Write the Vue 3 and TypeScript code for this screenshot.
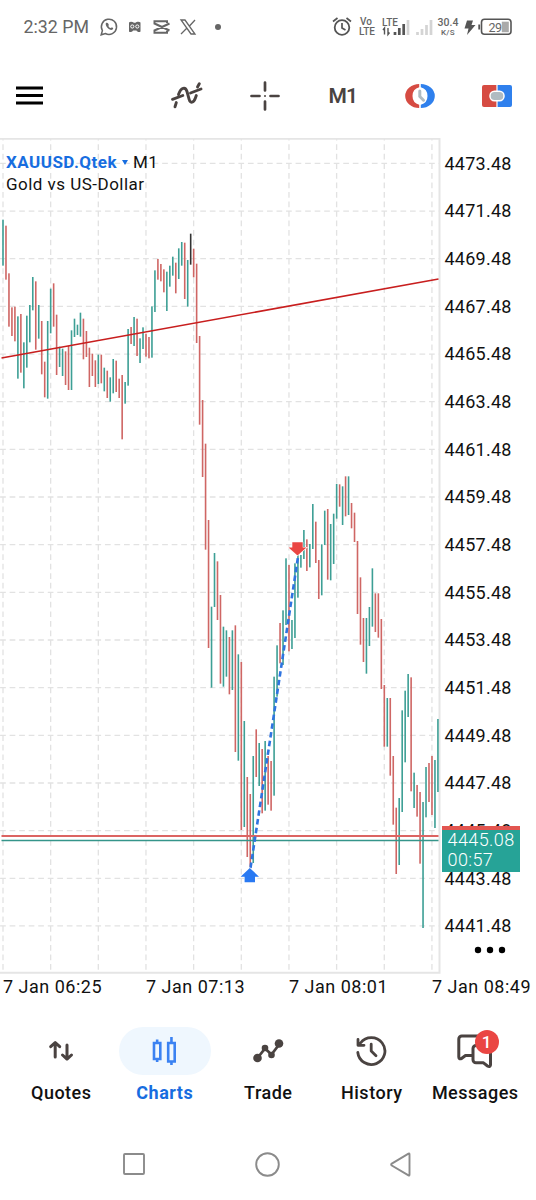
<script setup lang="ts">
interface Bar {
  x: number
  top: number
  height: number
  color: string
}

interface Segment {
  base: number
  bars: string
}

const STEP = 2.979
const CELL = 47.66
const PLOT_TOP = 138

const palette: Record<string, string> = { G: '#3d9f95', R: '#cf6664', K: '#333333' }

// Bar ranges in thirds of a pixel, measured from each segment's base line.
const segments: Segment[] = [
  {
    base: 130,
    bars:
      'G269-407 R287-449 R430-590 R532-618 R530-634 G559-746 R552-728 G637-775 G557-713 G525-637 ' +
      'G441-541 R454-659 G525-626 R573-733 R695-802 G573-806 G476-610 R460-590 R554-735 G650-711 ' +
      'G656-738 R664-765 R648-780 G601-780 G566-621 G584-615 G548-620 R566-688 R603-681 R653-771 ' +
      'R671-738 R691-771 G674-762 R674-760 G713-784 R722-804 G742-815 G687-790 R692-786 R746-804 ' +
      'R735-928 G756-821 G597-767 R591-642 G561-648 R566-678 G625-699 G592-657 R611-680 R621-685 ' +
      'G529-683 G421-546 R387-449 R402-454 R418-487 G425-543 G407-470 G380-437 R398-490 G355-447',
  },
  {
    base: 220,
    bars: 'G66-137 R68-237 G120-260 K41-134 R86-172 R131-369 R348-614 R540-771 R671-989',
  },
  {
    base: 500,
    bars:
      'R60-444 G320-563 G159-321 R184-360 R285-551 G380-560 G391-530 R411-583 G391-570 R376-756 ' +
      'G463-782 R486-990 G663-981 R831-1071 R882-1100 G768-1089 R688-831 G729-858 R747-940 G723-932 ' +
      'R768-914 R783-932 G530-887 G436-590 R369-490 G331-495 G175-375 R195-454 G360-447 G190-414 ' +
      'G165-293 G165-203 G90-177 R118-213 G132-202 G12-147',
  },
  {
    base: 450,
    bars:
      'R215-339 R330-447 G283-436 G182-285 R177-389 G222-391 G191-342 G102-206 R103-170 G109-225 ' +
      'R79-199 G79-195 R159-235 R188-276 R273-492 R382-584 R504-636 G504-671 G471-588 G355-530 ' +
      'R430-546 R430-563 R507-717',
  },
  {
    base: 640,
    bars:
      'R135-320 G174-320 R174-407 R348-554 R503-702 G474-675 G211-516 G152-367 G102-231 R112-454 ' +
      'G398-504 R435-530 R456-671 G486-864 G381-532 R369-486 R348-525 G360-564 G237-456',
  },
]

const bars: Bar[] = segments
  .flatMap(({ base, bars }) =>
    bars.split(' ').map((token) => {
      const [from, to] = token.slice(1).split('-').map(Number)
      return {
        top: base + from / 3 - PLOT_TOP,
        height: (to - from) / 3,
        color: palette[token[0]],
      }
    }),
  )
  .map((bar, i) => ({ ...bar, x: 3 + i * STEP - 0.8 }))

const columns = Array.from({ length: 10 }, (_, i) => 3 + i * CELL)
const rows = Array.from({ length: 17 }, (_, i) => 25.4 + i * CELL)
const prices = rows.map((_, i) => (4473.48 - i * 2).toFixed(2))
const times = ['7 Jan 06:25', '7 Jan 07:13', '7 Jan 08:01', '7 Jan 08:49']
</script>

<template>
  <div class="screen">
    <header class="status">
      <span class="clock">2:32 PM</span>
      <svg class="status-left" width="126" height="20" viewBox="0 0 126 20" fill="none" stroke="#666">
        <path d="M2.200 17.800l1.200-4.200a7.600 7.600 0 1 1 3 2.900z" stroke-width="1.500" />
        <path d="M6.800 6.200c-.8 2.500 3.400 7.400 6.400 6.600 1.500-.8 1.200-1.700.2-2.200-1.300-.8-1.600 1-2.700.1-1-.9-1.600-1.700-1-2.500.5-.8-1.400-3.500-2.900-2z" fill="#666" stroke="none" />
        <path d="M30 5.500c1-1 3.500-.8 5 .2h1.500c1-1 4-1.200 5-.2v9c-1 1-3.500.5-4-1h-3.500c-.5 1.500-3 2-4 1z" fill="#666" stroke="none" />
        <circle cx="33.300" cy="9.500" r="1.600" stroke="#fff" /><circle cx="38.300" cy="9.500" r="1.600" stroke="#fff" />
        <path d="M70.500 6.500l-15 7v2.300h12.500v-2M70.500 13.500l-15-7V4.200h12.500v1.800" stroke-width="2" />
        <path d="M82 3h4l10 14h-4zM96 3l-6 6.500M88 11l-6 6" stroke-width="1.300" />
        <circle cx="119" cy="10" r="3" fill="#666" stroke="none" />
      </svg>
      <svg class="status-right" width="184" height="22" viewBox="0 0 184 22" fill="none" stroke="#555">
        <circle cx="11" cy="11.500" r="7.300" stroke-width="1.800" />
        <path d="M11 7v5l3.500 2M2 5.500L6.500 2M20 5.500L15.500 2" stroke-width="1.700" />
        <g fill="#666" stroke="none" class="tiny">
          <text x="29" y="9" textLength="12">Vo</text>
          <text x="28" y="19" textLength="16">LTE</text>
          <text x="51" y="9.500" textLength="16">LTE</text>
          <text x="106.500" y="10.200" textLength="21" class="rate">30.4</text>
          <text x="110" y="19" textLength="13.500" class="unit">K/S</text>
        </g>
        <path d="M53.500 18.500v-6.500l-1.500 2M57 12v6.500l1.500-2" stroke-width="1.400" />
        <g stroke-width="2.700">
          <path d="M64 19v-3M68.300 19v-7M72.700 19v-11" />
          <path d="M77 19V4M86.500 19v-3M91 19v-6M95.500 19v-10M100 19V4" stroke="#d4d4d4" />
        </g>
        <path d="M136 4.500h6l-1.500 4.500h4l-8.500 10 1.500-6.500h-4z" fill="#555" stroke="none" />
        <rect x="150.500" y="3.300" width="29.500" height="15" rx="3" stroke-width="1.600" />
        <path d="M148.200 8.500v5" stroke-width="1.800" />
        <rect x="170.800" y="5.700" width="7" height="10.500" fill="#aaa" stroke="none" />
        <text x="157.500" y="15.500" class="charge" textLength="13.500">29</text>
      </svg>
    </header>

    <nav class="toolbar">
      <svg class="menu" width="27" height="20" viewBox="0 0 27 20" stroke="#000" stroke-width="2.800">
        <path d="M0 2h27M0 9.500h27M0 17h27" />
      </svg>
      <svg class="wave" width="34" height="30" viewBox="0 0 34 30" fill="none" stroke="#4a4341" stroke-width="2.900" stroke-linecap="round">
        <path d="M5 25.800l1.300-4.200M8.500 13.500C11 6 15.500 5.500 17 10.500l2.200 8c1 4 4.500 3.500 6.200-1.500l.9-2.500M27.500 6L29.300 2.800" />
        <path d="M2.500 18.300l10.300-3.800M20.500 12L31 8" />
      </svg>
      <svg class="cross" width="30" height="30" viewBox="0 0 30 30" stroke="#4a4341" stroke-width="2.700" stroke-linecap="round">
        <path d="M15 1.500v8M15 20.500v8M1.500 15h8M20.500 15h8" /><path d="M15 15h.01" stroke-width="2" />
      </svg>
      <span class="period">M1</span>
      <svg class="speed" width="30" height="26" viewBox="0 0 30 26" fill="none">
        <path d="M14.200 1A14 12 0 0 0 14.200 25V21.700A9 9 0 0 1 14.200 4.300z" fill="#d64b42" />
        <path d="M15.800 1A14 12 0 0 1 15.800 25V21.700A9 9 0 0 0 15.800 4.300z" fill="#2f80ed" />
        <path d="M14.800 8v5.500l3.700 3.700" stroke="#b0bbc1" stroke-width="3" stroke-linecap="round" />
      </svg>
      <svg class="trade-panel" width="30" height="22" viewBox="0 0 30 22">
        <path d="M2 0h12.400v22H2a2 2 0 0 1-2-2V2a2 2 0 0 1 2-2z" fill="#d64b42" />
        <path d="M15.600 0H28a2 2 0 0 1 2 2v18a2 2 0 0 1-2 2H15.600z" fill="#2f80ed" />
        <rect x="8" y="6.200" width="14" height="9.600" rx="4.500" fill="#b0bbc1" stroke="#fff" stroke-width="1.500" />
      </svg>
    </nav>

    <main class="chart">
      <div class="plot">
        <svg width="442" height="838" viewBox="0 0 442 838">
          <g stroke="#e2e2e2" stroke-width="1.300" stroke-dasharray="5.700 3.832">
            <line v-for="x in columns" :key="'c' + x" :x1="x" :x2="x" y1="-3.200" y2="835" />
            <line v-for="y in rows" :key="'r' + y" x1="0.100" x2="439" :y1="y" :y2="y" />
          </g>
          <path d="M0 .8H439.500V834.800H0" fill="none" stroke="#e5e5e5" stroke-width="2" />
          <rect v-for="bar in bars" :key="bar.x" :x="bar.x" :y="bar.top" width="1.600" :height="bar.height" :fill="bar.color" />
          <path d="M1.500 220L438.500 141" stroke="#c81e1e" stroke-width="1.600" />
          <path d="M1.500 698H438.500" stroke="#dc6462" stroke-width="1.900" />
          <path d="M1.500 702.500H438.500" stroke="#35958a" stroke-width="1.500" />
          <path d="M250.500 730L298 419" stroke="#2f74e0" stroke-width="2.600" stroke-dasharray="5.500 3.300" />
          <path d="M249.800 730l9.200 8.700h-4v5.500h-10.400v-5.500h-4z" fill="#2979f2" stroke="#fff" stroke-width="1.200" paint-order="stroke" />
          <path d="M297.500 417.500l-9-8h3.800v-5.200h10.400v5.200h3.800z" fill="#ea4643" stroke="#fff" stroke-width="1.200" paint-order="stroke" />
        </svg>
        <div class="title">
          <div><b>XAUUSD.Qtek</b><i class="caret"></i>M1</div>
          <div>Gold vs US-Dollar</div>
        </div>
      </div>
      <aside class="prices">
        <div v-for="price in prices" :key="price" class="price">{{ price }}</div>
        <div class="tag"><span>4445.08</span><span>00:57</span></div>
        <svg class="more" width="32" height="8" viewBox="0 0 32 8"><circle cx="4" cy="4" r="3.200" /><circle cx="16" cy="4" r="3.200" /><circle cx="28" cy="4" r="3.200" /></svg>
      </aside>
    </main>
    <div class="times"><span v-for="time in times" :key="time">{{ time }}</span></div>

    <nav class="tabs">
      <div class="tab">
        <div class="pill">
          <svg width="26" height="22" viewBox="0 0 26 22" fill="none" stroke="#4a4341" stroke-width="3" stroke-linecap="round" stroke-linejoin="round">
            <path d="M7.200 17V3M2.700 6.700L7.200 2.500l4.500 4.200M19 5v14M14.500 15l4.500 4.200 4.500-4.200" />
          </svg>
        </div>
        <span>Quotes</span>
      </div>
      <div class="tab active">
        <div class="pill">
          <svg width="26" height="30" viewBox="0 0 26 30" fill="none" stroke="#3b82f2" stroke-width="2.600">
            <path d="M2 7h6.300v16H2zM5.150 3.500V7M5.150 23v3M16.200 7h6.500v18.500h-6.500zM19.450 1v6M19.450 25.500V29" />
          </svg>
        </div>
        <span>Charts</span>
      </div>
      <div class="tab">
        <div class="pill">
          <svg width="32" height="26" viewBox="0 0 32 26" fill="#4a4341" stroke="#4a4341" stroke-width="2.800">
            <path d="M5.500 20L13 10.500l6.500 6L27.500 6" fill="none" />
            <g stroke="none"><circle cx="5.500" cy="20" r="4.300" /><circle cx="13" cy="10" r="3.300" /><circle cx="19.500" cy="17" r="3.300" /><circle cx="27" cy="5.500" r="4.300" /></g>
          </svg>
        </div>
        <span>Trade</span>
      </div>
      <div class="tab">
        <div class="pill">
          <svg width="32" height="32" viewBox="0 0 32 32" fill="none" stroke="#4a4341" stroke-width="2.800" stroke-linecap="round" stroke-linejoin="round">
            <path d="M1.800 17.500A13.600 13.400 0 1 0 4.500 8M2 4.500v5.800h6" />
            <path d="M15.200 9.200v6.800l4.800 4.800" />
          </svg>
        </div>
        <span>History</span>
      </div>
      <div class="tab">
        <div class="pill">
          <svg width="38" height="36" viewBox="0 0 38 36" fill="none" stroke="#4a4341" stroke-width="3" stroke-linejoin="round">
            <path d="M16 22.500H9.500L5.500 25.500Q2.800 26.500 2.800 24V6a3 3 0 0 1 3-3h21a3 3 0 0 1 3 3v7" />
            <path d="M20 12.500h11.500a3 3 0 0 1 3 3V32Q34 34.500 31.500 33L27.500 29.800H20a3 3 0 0 1-3-3V15.500a3 3 0 0 1 3-3z" fill="#fff" />
          </svg>
          <em class="badge">1</em>
        </div>
        <span>Messages</span>
      </div>
    </nav>

    <footer class="system">
      <svg width="22" height="22" viewBox="0 0 22 22"><rect x="1" y="1" width="20" height="20" rx="1" /></svg>
      <svg width="25" height="25" viewBox="0 0 25 25"><circle cx="12.500" cy="12.500" r="11.300" /></svg>
      <svg width="21" height="25" viewBox="0 0 21 25"><path d="M18.500 1.600Q19.500 1 19.500 2.500v20q0 1.500-1 .9L1.800 13.500q-1.300-1 0-1.900z" /></svg>
    </footer>
  </div>
</template>

<style>
body {
  margin: 0;
  background: #fff;
}
</style>

<style scoped>
.screen {
  width: 536px;
  height: 1200px;
  overflow: hidden;
  background: #fff;
  color: #111;
  font-family: Roboto, 'Liberation Sans', sans-serif;
}
svg {
  display: block;
  flex: none;
}
.status {
  display: flex;
  align-items: center;
  height: 54px;
  color: #666;
}
.clock {
  width: 75px;
  margin-left: 23.5px;
  font-size: 17.8px;
  line-height: 20px;
  white-space: nowrap;
}
.status-right {
  margin-left: 106.5px;
}
.tiny {
  font-size: 10px;
  font-weight: 500;
}
.rate {
  font-size: 10.5px;
}
.unit {
  font-size: 8px;
}
.charge {
  fill: #666;
  stroke: none;
  font-size: 12.5px;
}
.toolbar {
  display: flex;
  align-items: center;
  height: 83px;
  padding-bottom: 1px;
}
.menu {
  margin-left: 16px;
}
.wave {
  margin-left: 127px;
}
.cross {
  margin-left: 46px;
}
.period {
  width: 27px;
  margin: 0 0 0 48.5px;
  color: #4a4341;
  font-size: 21px;
  font-weight: 600;
  letter-spacing: -0.9px;
}
.speed {
  margin-left: 49px;
}
.trade-panel {
  margin-left: 47.5px;
}
.chart {
  display: flex;
  height: 838px;
}
.plot {
  position: relative;
  width: 442px;
}
.title {
  position: absolute;
  top: 13px;
  left: 6px;
  font-size: 17px;
  line-height: 22px;
  letter-spacing: 0.48px;
  white-space: nowrap;
}
.title b {
  color: #176de0;
  font-weight: 700;
}
.caret {
  display: inline-block;
  margin: 0 5px 3px 5px;
  border: 3px solid transparent;
  border-top: 5px solid #176de0;
  border-bottom: 0;
}
.prices {
  position: relative;
  width: 94px;
  padding-top: 1.7px;
  box-sizing: border-box;
}
.price {
  height: 47.66px;
  padding-left: 2.5px;
  font-size: 18px;
  line-height: 47.66px;
  letter-spacing: 0.25px;
}
.tag {
  position: absolute;
  top: 687.5px;
  left: 0;
  display: flex;
  flex-direction: column;
  width: 78px;
  height: 46px;
  padding-left: 5.5px;
  box-sizing: border-box;
  border-top: 4.5px solid #e25550;
  background: #26a397;
  color: #fff;
  font-size: 18px;
  font-weight: 300;
  line-height: 20.5px;
  letter-spacing: 0.4px;
}
.more {
  position: absolute;
  top: 808px;
  left: 32px;
}
.times {
  display: flex;
  height: 40px;
  padding-left: 3px;
  font-size: 18px;
  line-height: 21px;
  letter-spacing: 0.5px;
  white-space: nowrap;
}
.times span {
  flex: 0 0 143px;
}
.tabs {
  display: grid;
  grid-template-columns: repeat(5, 103.5px);
  padding-left: 9.5px;
  margin-top: 11px;
  height: 91px;
}
.tab {
  display: flex;
  flex-direction: column;
  align-items: center;
  font-size: 18px;
  font-weight: 500;
  letter-spacing: 0.5px;
}
.pill {
  position: relative;
  display: flex;
  align-items: center;
  justify-content: center;
  width: 92px;
  height: 48px;
  margin-bottom: 7px;
  border-radius: 24px;
}
.active {
  color: #176de0;
  font-weight: 700;
}
.active .pill {
  background: #eff7fe;
}
.badge {
  position: absolute;
  top: 3px;
  left: 45.5px;
  width: 24px;
  height: 24px;
  border-radius: 50%;
  background: #ea4643;
  color: #fff;
  font-size: 17px;
  font-style: normal;
  line-height: 24px;
  text-align: center;
}
.system {
  display: flex;
  align-items: center;
  height: 92px;
  padding-left: 123px;
  gap: 110px;
}
.system svg {
  fill: none;
  stroke: #8b8b8b;
  stroke-width: 1.9;
}
</style>
